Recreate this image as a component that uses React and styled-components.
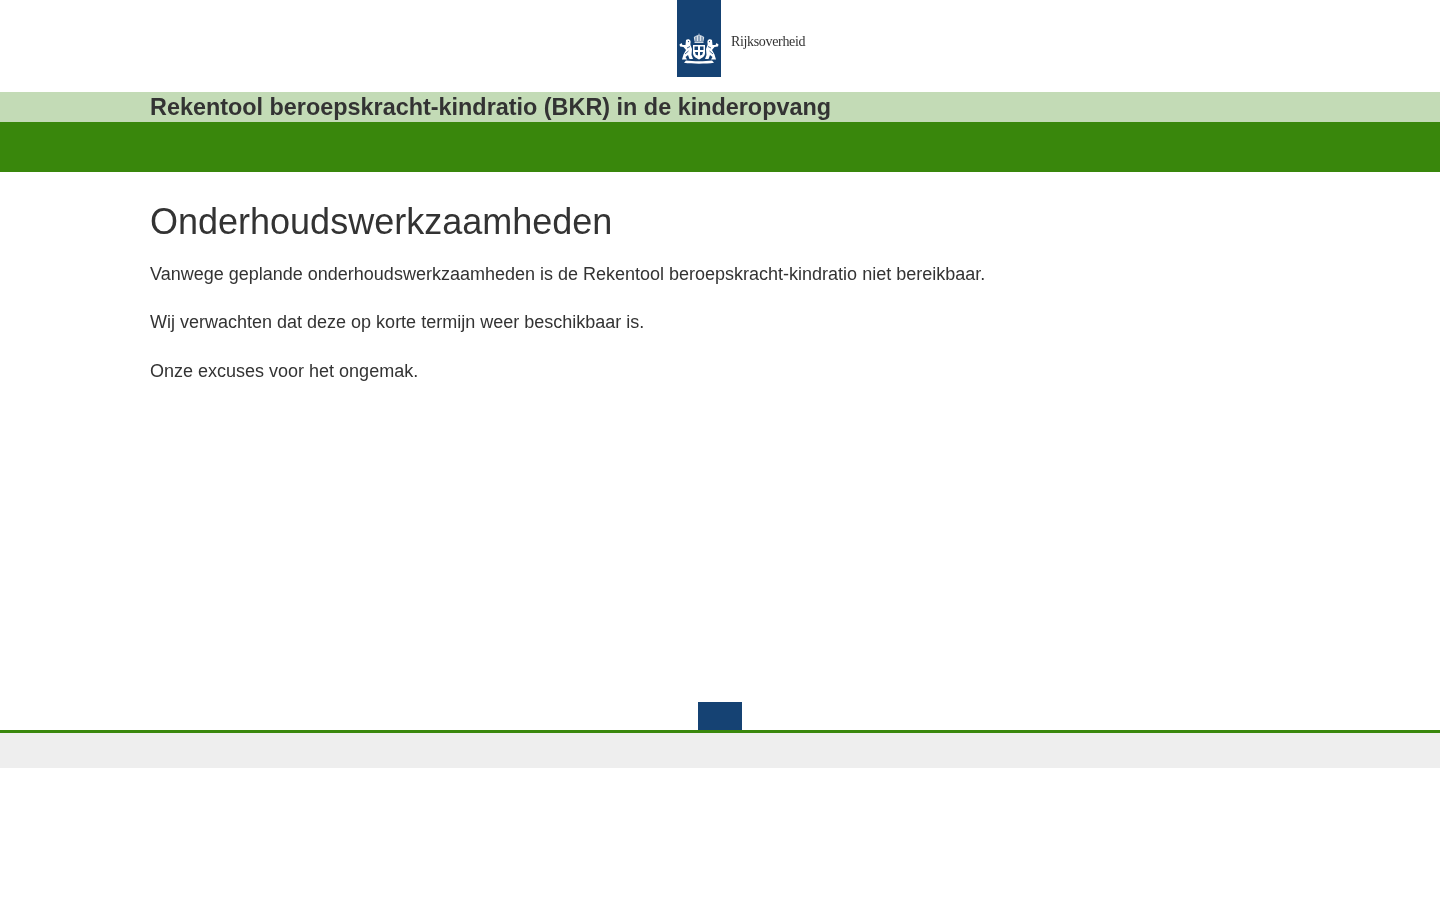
import React from 'react';
import styled, { createGlobalStyle } from 'styled-components';

const GlobalStyle = createGlobalStyle`
  html, body {
    margin: 0;
    padding: 0;
    background: #fff;
    color: #333;
    font-family: "Liberation Sans", Arial, sans-serif;
  }
`;

const Page = styled.div`
  min-height: 900px;
  display: flex;
  flex-direction: column;
  will-change: transform;
`;

const LogoBar = styled.header`
  height: 92px;
  padding-left: 677px;
  box-sizing: border-box;
`;

const LogoLink = styled.div`
  display: flex;
  align-items: flex-start;
`;

const LogoBlock = styled.div`
  width: 44px;
  height: 77px;
  background: #154273;
  display: flex;
  flex-direction: column;
  align-items: center;
  padding-top: 32px;
  box-sizing: border-box;
`;

const LogoText = styled.span`
  margin: 34px 0 0 10px;
  font-family: "Liberation Serif", "Times New Roman", serif;
  font-size: 14px;
  letter-spacing: -0.34px;
  line-height: 16px;
  color: #333;
`;

const TitleBar = styled.div`
  height: 30px;
  background: #c3dbb6;
  padding-left: 150px;
`;

const SiteTitle = styled.div`
  font-size: 23.4px;
  font-weight: 700;
  line-height: 30px;
  color: #333;
`;

const NavBar = styled.div`
  height: 50px;
  background: #39870c;
`;

const Main = styled.main`
  height: 530px;
  padding: 28px 150px 0;
  box-sizing: border-box;
`;

const Heading = styled.h1`
  margin: 0 0 17.8px;
  font-size: 36px;
  font-weight: 400;
  line-height: 43px;
  color: #333;
`;

const Paragraph = styled.p`
  margin: 0 0 22.5px;
  font-size: 18px;
  line-height: 26px;
  color: #333;
`;

const Footer = styled.footer`
  display: flex;
  flex-direction: column;
  align-items: center;
`;

const FooterTab = styled.div`
  width: 44px;
  height: 28px;
  background: #154273;
`;

const FooterBand = styled.div`
  align-self: stretch;
  height: 35px;
  background: #eeeeee;
  border-top: 3px solid #39870c;
`;

const lion = 'M7 8 C8.5 6.5 11 7 11.5 9 C12 10.5 11 11.5 11.5 13 L13 17 L12.5 23 L14 27 H10.5 L9 23 L6.5 25 L8 27.5 H3 L4.5 22.5 L7 18 L4.5 15 L1 14.5 L0.5 12.5 L2.5 11 L3.5 13 L6.5 13 Z';

const Emblem = () => (
  <svg width="40" height="33" viewBox="0 0 40 33" aria-hidden="true">
    <g fill="#fff">
      {/* crown */}
      <path d="M15.5 9 L14.8 5.5 C16 3.5 18 3.5 19.4 3 L20 1 L20.6 3 C22 3.5 24 3.5 25.2 5.5 L24.5 9 Z" opacity="0.85" />
      <rect x="15.5" y="9.5" width="9" height="1.3" />
      {/* lions */}
      <path d={lion} />
      <path d={lion} transform="translate(40 0) scale(-1 1)" />
      {/* shield */}
      <path d="M14 13 H26 V21 C26 24.5 23 26 20 27.5 C17 26 14 24.5 14 21 Z" />
      {/* ribbon */}
      <path d="M7 28.5 C14 29.6 26 29.6 33 28.5 L35 30.8 C27 32 13 32 5 30.8 Z" />
    </g>
    <g fill="none" stroke="#154273" strokeWidth="0.8">
      <path d="M17 4.5 V9 M20 3.5 V9 M23 4.5 V9" />
      <path d="M6 22 L9.5 19 M8 16 L11 14.5 M34 22 L30.5 19 M32 16 L29 14.5" />
    </g>
    <g fill="#154273">
      <path d="M15.5 14.5 H19 V18 H15.5 Z M21 14.5 H24.5 V18 H21 Z" />
      <path d="M16 20 H19 V23.5 L16.8 22.8 Z M21 20 H24 L23.2 22.8 L21 23.5 Z" />
      <circle cx="9.5" cy="9.6" r="0.6" />
      <circle cx="30.5" cy="9.6" r="0.6" />
    </g>
  </svg>
);

const messages = [
  'Vanwege geplande onderhoudswerkzaamheden is de Rekentool beroepskracht-kindratio niet bereikbaar.',
  'Wij verwachten dat deze op korte termijn weer beschikbaar is.',
  'Onze excuses voor het ongemak.',
];

const App = () => (
  <Page>
    <GlobalStyle />
    <LogoBar>
      <LogoLink>
        <LogoBlock>
          <Emblem />
        </LogoBlock>
        <LogoText>Rijksoverheid</LogoText>
      </LogoLink>
    </LogoBar>
    <TitleBar>
      <SiteTitle>Rekentool beroepskracht-kindratio (BKR) in de kinderopvang</SiteTitle>
    </TitleBar>
    <NavBar />
    <Main>
      <Heading>Onderhoudswerkzaamheden</Heading>
      {messages.map((text) => (
        <Paragraph key={text}>{text}</Paragraph>
      ))}
    </Main>
    <Footer>
      <FooterTab />
      <FooterBand />
    </Footer>
  </Page>
);

export default App;
